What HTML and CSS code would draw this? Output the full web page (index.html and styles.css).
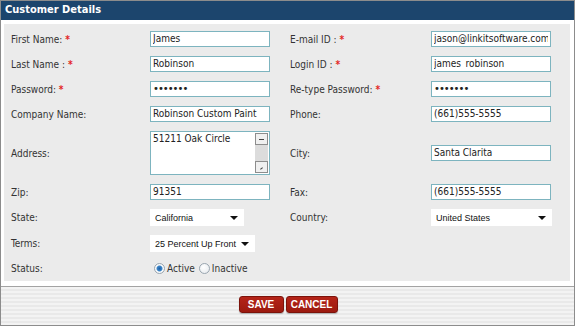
FILE: index.html
```html
<!DOCTYPE html>
<html lang="en">
<head>
    <meta charset="UTF-8">
    <title>Customer Details</title>
    <link rel="stylesheet" href="styles.css">
</head>
<body>
    <div class="panel">
        <div class="panel-title">Customer Details</div>

        <div class="panel-body">
            <div class="form-grid">
                <!-- row 1 -->
                <label class="lbl">First Name: <span class="req">*</span></label>
                <input type="text" class="txt" value="James">
                <label class="lbl">E-mail ID : <span class="req">*</span></label>
                <input type="text" class="txt" value="jason@linkitsoftware.com">

                <!-- row 2 -->
                <label class="lbl">Last Name : <span class="req">*</span></label>
                <input type="text" class="txt" value="Robinson">
                <label class="lbl">Login ID : <span class="req">*</span></label>
                <input type="text" class="txt" value="james_robinson">

                <!-- row 3 -->
                <label class="lbl">Password: <span class="req">*</span></label>
                <input type="password" class="txt" value="1234567">
                <label class="lbl">Re-type Password: <span class="req">*</span></label>
                <input type="password" class="txt" value="1234567">

                <!-- row 4 -->
                <label class="lbl">Company Name:</label>
                <input type="text" class="txt" value="Robinson Custom Paint">
                <label class="lbl">Phone:</label>
                <input type="text" class="txt" value="(661)555-5555">

                <!-- address -->
                <label class="lbl">Address:</label>
                <div class="area-box">
                    <textarea class="area">51211 Oak Circle</textarea>
                    <div class="fake-scroll">
                        <span class="sbtn up"></span>
                        <span class="sbtn down"></span>
                    </div>
                </div>
                <label class="lbl">City:</label>
                <input type="text" class="txt" value="Santa Clarita">

                <!-- zip -->
                <label class="lbl">Zip:</label>
                <input type="text" class="txt" value="91351">
                <label class="lbl">Fax:</label>
                <input type="text" class="txt" value="(661)555-5555">

                <!-- selects -->
                <label class="lbl">State:</label>
                <span class="sel-wrap state">
                    <select class="sel"><option>California</option></select>
                </span>
                <label class="lbl">Country:</label>
                <span class="sel-wrap country">
                    <select class="sel"><option>United States</option></select>
                </span>

                <label class="lbl">Terms:</label>
                <span class="sel-wrap terms">
                    <select class="sel"><option>25 Percent Up Front</option></select>
                </span>
                <span></span><span></span>

                <label class="lbl">Status:</label>
                <div class="radios">
                    <input type="radio" name="status" class="rad" checked> <span>Active</span>
                    <input type="radio" name="status" class="rad"> <span>Inactive</span>
                </div>
                <span></span><span></span>
            </div>
        </div>

        <div class="panel-footer">
            <button class="btn save">SAVE</button>
            <button class="btn cancel">CANCEL</button>
        </div>
    </div>
</body>
</html>
```

FILE: styles.css
```css
:root {
    --title-bg: #1c456d;
    --form-bg: #ebebeb;
    --field-border: #7db4bf;
    --label-color: #333333;
    --btn-red: #a81d12;
}

body {
    margin: 0;
    font-family: "DejaVu Sans Condensed", "DejaVu Sans", sans-serif;
    font-size: 10px;
    color: var(--label-color);
}

.panel {
    width: 575px;
    height: 326px;
    box-sizing: border-box;
    border: 1px solid #8c8c8c;
    background: #ffffff;
    display: flex;
    flex-direction: column;
}

.panel-title {
    height: 19px;
    line-height: 18px;
    background: var(--title-bg);
    color: #ffffff;
    font-weight: bold;
    font-size: 11px;
    padding-left: 4px;
}

.panel-body {
    padding: 4px 4px 5px 3px;
}

.form-grid {
    background: var(--form-bg);
    height: 257px;
    box-sizing: border-box;
    padding: 7px 0 0 7px;
    display: grid;
    grid-template-columns: 139px 140px 141px 1fr;
    align-content: start;
    row-gap: 9px;
    align-items: center;
}

.lbl {
    white-space: nowrap;
}

.req {
    color: #e3261f;
    font-weight: bold;
}

.txt {
    width: 120px;
    height: 16px;
    box-sizing: border-box;
    border: 1px solid var(--field-border);
    padding: 0 2px 1px;
    margin: 0;
    font-family: "DejaVu Sans Condensed", "DejaVu Sans", sans-serif;
    font-size: 10px;
    line-height: 12px;
    color: #222222;
    background: #ffffff;
    outline: none;
}

.txt[type="password"] {
    font-family: "DejaVu Sans", sans-serif;
    letter-spacing: -1px;
}

/* address box with drawn scrollbar */
.area-box {
    width: 120px;
    height: 44px;
    box-sizing: border-box;
    border: 1px solid var(--field-border);
    background: #ffffff;
    display: flex;
}

.area {
    flex: 1;
    border: none;
    resize: none;
    overflow: hidden;
    padding: 1px 2px;
    margin: 0;
    font-family: "DejaVu Sans Condensed", "DejaVu Sans", sans-serif;
    font-size: 10px;
    color: #222222;
    outline: none;
}

.fake-scroll {
    width: 13px;
    margin: 1px 1px 1px 0;
    background: #dcdcdc;
    display: flex;
    flex-direction: column;
    justify-content: space-between;
}

.sbtn {
    position: relative;
    height: 12px;
    box-sizing: border-box;
    border: 1px solid #8d8d8d;
    background: #f0f0f0;
}

.sbtn::after {
    content: "";
    position: absolute;
    left: 3px;
    width: 5px;
    height: 1px;
    background: #444444;
}

.sbtn.up::after { top: 5px; }
.sbtn.down::after { top: 6px; transform: rotate(-40deg); width: 3px; left: 4px; }

/* selects */
.sel-wrap {
    position: relative;
    display: block;
    height: 17px;
    justify-self: start;
}

.sel-wrap.state { width: 94px; }
.sel-wrap.terms { width: 105px; }
.sel-wrap.country { width: 121px; }

.sel-wrap::after {
    content: "";
    position: absolute;
    right: 6px;
    top: 7px;
    border-top: 4px solid #111111;
    border-left: 4px solid transparent;
    border-right: 4px solid transparent;
    pointer-events: none;
}

.sel {
    appearance: none;
    -webkit-appearance: none;
    display: block;
    width: 100%;
    height: 17px;
    border: none;
    border-radius: 0;
    background: #ffffff;
    padding: 0 0 0 5px;
    margin: 0;
    font-family: "Liberation Sans", Arial, sans-serif;
    font-size: 9px;
    color: #111111;
    outline: none;
}

/* status radios */
.radios {
    display: flex;
    align-items: center;
    gap: 2px;
    padding-left: 4px;
    height: 14px;
}

.rad {
    appearance: none;
    -webkit-appearance: none;
    width: 11px;
    height: 11px;
    margin: 0;
    border-radius: 50%;
    border: 1px solid #9aa6b0;
    background: radial-gradient(circle at 40% 35%, #ffffff 0%, #e4e8ec 100%);
    box-sizing: border-box;
}

.rad:checked {
    background: radial-gradient(circle, #1d5fa8 0, #3d86c8 2.5px, #ffffff 3.5px, #dde3ea 100%);
}

.radios span {
    margin-right: 2px;
}

/* footer */
.panel-footer {
    flex: 1;
    border-top: 1px solid #a3a3a3;
    background: repeating-linear-gradient(to bottom, #f3f3f3 0, #f3f3f3 2px, #e9e9e9 2px, #e9e9e9 4px);
    display: flex;
    justify-content: center;
    align-items: flex-start;
    gap: 2px;
    padding-top: 9px;
    padding-left: 1px;
}

.btn {
    height: 17px;
    border: 1px solid #7c130b;
    border-radius: 3px;
    background: linear-gradient(to bottom, #b52418 0%, #9c1a10 100%);
    color: #ffffff;
    font-family: "Liberation Sans", Arial, sans-serif;
    font-weight: bold;
    font-size: 10px;
    padding: 0;
    box-shadow: 0 1px 1px rgba(0,0,0,0.25);
    cursor: pointer;
}

.btn.save { width: 45px; }
.btn.cancel { width: 52px; }
```
